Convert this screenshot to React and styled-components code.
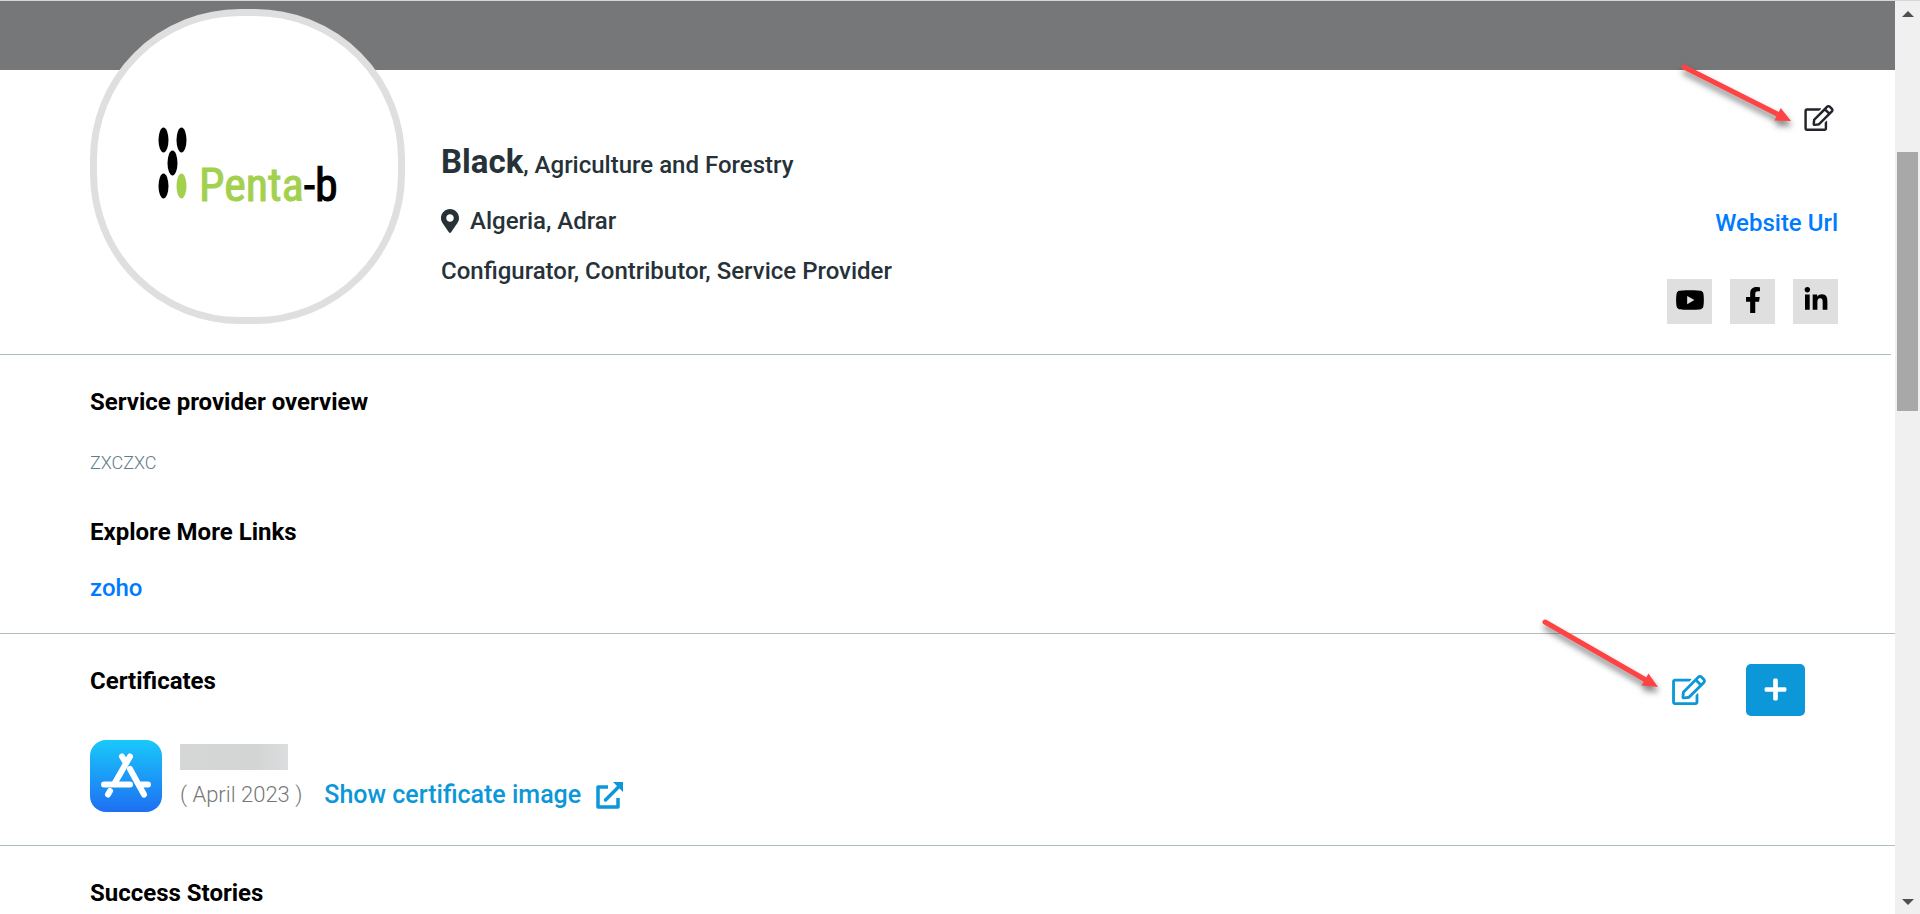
import React from 'react'
import styled, { createGlobalStyle } from 'styled-components'
import { FaMapMarkerAlt, FaRegEdit, FaYoutube, FaFacebookF, FaLinkedinIn, FaPlus } from 'react-icons/fa'

const GlobalStyle = createGlobalStyle`
  * {
    box-sizing: border-box;
  }

  body {
    margin: 0;
    background: #ffffff;
    font-family: Roboto, sans-serif;
    font-size: 24px;
    line-height: 28px;
    color: #263238;
  }

  h1, h2, p {
    margin: 0;
  }
`

const Page = styled.div`
  display: grid;
  grid-template-columns: 1fr 25px;
  min-height: 100vh;
  border-top: 1px solid #d5d6d6;
`

const Main = styled.main`
  min-width: 0;
`

const Cover = styled.div`
  height: 69px;
  background: #767779;
`

const Profile = styled.header`
  display: flex;
  gap: 36px;
  height: 285px;
  margin-right: 4px;
  padding: 0 53px 0 90px;
  border-bottom: 1px solid #b0bec5;
`

const Avatar = styled.div`
  display: flex;
  align-items: center;
  justify-content: center;
  flex: none;
  width: 315px;
  height: 315px;
  margin-top: -61px;
  border: 7px solid #dfdfdf;
  border-radius: 150px;
  background: #ffffff;
`

const Details = styled.div`
  display: flex;
  flex: 1;
  flex-direction: column;
  gap: 22px;
  padding-top: 72px;
  font-weight: 500;
`

const Name = styled.h1`
  font-size: 24px;
  font-weight: 500;
  line-height: 40px;

  strong {
    font-size: 33px;
    font-weight: 700;
  }
`

const Location = styled.p`
  display: flex;
  align-items: center;
  gap: 11px;

  svg {
    width: 18px;
  }
`

const Contact = styled.div`
  display: flex;
  flex-direction: column;
  align-items: flex-end;
  padding-top: 35px;
`

const IconButton = styled.button`
  display: flex;
  padding: 0;
  border: 0;
  background: none;
  color: ${({ $color }) => $color};
  cursor: pointer;

  svg {
    width: ${({ $width }) => $width}px;
    height: ${({ $height }) => $height}px;
  }
`

const Link = styled.a`
  display: inline-flex;
  align-items: center;
  gap: 15px;
  color: ${({ $accent }) => ($accent ? '#0b97d8' : '#007bff')};
  font-size: ${({ $accent }) => ($accent ? 25 : 24)}px;
  font-weight: 500;
  text-decoration: none;
`

const EditProfile = styled(IconButton)`
  margin: 0 4px 78px 0;
`

const Socials = styled.nav`
  display: flex;
  gap: 18px;
  margin-top: 42px;
`

const Social = styled.a`
  display: flex;
  justify-content: center;
  width: 45px;
  height: 45px;
  padding-top: 8px;
  background: #dfdfdf;
  color: #000000;
  font-size: 26px;

  svg {
    width: 30px;
  }
`

const Section = styled.section`
  padding: 33px 90px 31px;
  border-bottom: 1px solid #b0bec5;

  &:last-child {
    padding-bottom: 0;
    border-bottom: 0;
  }
`

const Heading = styled.h2`
  color: #000000;
  font-size: 24px;
  font-weight: 700;
  line-height: 28px;
`

const Overview = styled.p`
  margin: 33px 0 41px;
  color: #607d8b;
  font-size: 18px;
  font-weight: 300;
`

const LinkRow = styled.div`
  display: flex;
  margin-top: 28px;
`

const SectionHead = styled.div`
  display: flex;
  justify-content: space-between;
  height: 49px;
`

const Actions = styled.div`
  display: flex;
  align-items: center;
  gap: 40px;
  height: 52px;
  margin-top: -3px;
`

const AddButton = styled.button`
  display: flex;
  align-items: center;
  justify-content: center;
  width: 59px;
  height: 52px;
  padding: 0 0 2px;
  border: 0;
  border-radius: 5px;
  background: #0b97d8;
  color: #ffffff;
  font-size: 25px;
  cursor: pointer;
`

const Certificate = styled.article`
  display: flex;
  gap: 18px;
  margin-top: 24px;
  padding-bottom: 2px;
`

const CertificateText = styled.div`
  padding-top: 4px;
`

const HiddenName = styled.div`
  width: 108px;
  height: 26px;
  background: linear-gradient(90deg, #d5d6d6, #d3d4d4 70%, #dcddde);
`

const Issued = styled.div`
  display: flex;
  align-items: center;
  gap: 22px;
  margin-top: 11px;
  color: #777777;
  font-size: 22px;
  font-weight: 300;
`

const Scrollbar = styled.div`
  display: flex;
  flex-direction: column;
  align-items: center;
  padding: 10px 0 9px;
  background: #f0f0f0;
`

const Thumb = styled.div`
  width: 21px;
  height: 259px;
  margin: 135px 0 auto;
  background: #a8a8a8;
`

const Caret = styled.div`
  border: 6px solid transparent;
  border-width: ${({ $down }) => ($down ? '6px 6px 0' : '0 6px 6px')};
  border-top-color: ${({ $down }) => ($down ? '#505050' : 'transparent')};
  border-bottom-color: ${({ $down }) => ($down ? 'transparent' : '#505050')};
`

const Pointer = styled.svg`
  position: absolute;
  top: ${({ $top }) => $top}px;
  right: ${({ $right }) => $right}px;
  filter: drop-shadow(1px 5px 3px rgba(0, 0, 0, 0.5));
  pointer-events: none;
`

const LogoText = styled.text`
  font-family: 'Liberation Sans Narrow', 'Roboto Condensed', 'Liberation Sans', sans-serif;
  font-size: 46px;
`

const Logo = () => (
  <svg width="180" height="90" viewBox="0 0 180 90" role="img" aria-label="Penta-b">
    <ellipse cx="5.500" cy="18" rx="5" ry="12.500" />
    <ellipse cx="23.500" cy="18" rx="5" ry="12.500" />
    <ellipse cx="14.500" cy="41" rx="5" ry="12.500" />
    <ellipse cx="5.500" cy="64" rx="5" ry="12.500" />
    <ellipse cx="23.500" cy="64" rx="5" ry="12.500" fill="#a4d04f" />
    <LogoText x="41" y="79" fill="#a4d04f" stroke="#a4d04f">
      Penta<tspan fill="#000000" stroke="#000000">-b</tspan>
    </LogoText>
  </svg>
)

const AppStoreIcon = () => (
  <svg width="72" height="72" viewBox="0 0 72 72" aria-hidden="true">
    <defs>
      <linearGradient id="store" x1="0" y1="0" x2="0" y2="1">
        <stop offset="0" stopColor="#19c8fb" />
        <stop offset="1" stopColor="#1e6ff2" />
      </linearGradient>
    </defs>
    <rect width="72" height="72" rx="16" fill="url(#store)" />
    <g fill="none" stroke="#ffffff" strokeWidth="6" strokeLinecap="round">
      <path d="M40 16.500L24.500 43.500" />
      <path d="M32 16.500L36 23" />
      <path d="M40 29L54 54.500" />
      <path d="M14 44.500H40M51 44.500H58" />
      <path d="M20 51L18 54.500" />
    </g>
  </svg>
)

const OpenIcon = () => (
  <svg width="27" height="27" viewBox="0 0 27 27" fill="none" stroke="currentColor" strokeWidth="3.500" strokeLinejoin="round" aria-hidden="true">
    <path d="M12 5H2V25H22V16" />
    <path d="M9.500 18L22 5.500" strokeLinecap="round" />
    <path d="M17 0H27V10Z" fill="currentColor" stroke="none" />
  </svg>
)

const Arrow = ({ top, right, dx, dy }) => {
  const length = Math.hypot(dx, dy)
  const angle = (Math.atan2(dy, dx) * 180) / Math.PI
  return (
    <Pointer $top={top} $right={right} width={dx + 6} height={dy + 12} viewBox={`-4 -4 ${dx + 6} ${dy + 12}`} overflow="visible" aria-hidden="true">
      <g transform={`rotate(${angle})`} fill="#ff4343">
        <path d={`M0 0H${length - 12}`} stroke="#ff4343" strokeWidth="5" strokeLinecap="round" />
        <path d={`M${length - 15} -7L${length} 0L${length - 15} 7Z`} />
      </g>
    </Pointer>
  )
}

const App = () => (
  <>
    <GlobalStyle />
    <Page>
      <Main>
        <Cover />
        <Profile>
          <Avatar>
            <Logo />
          </Avatar>
          <Details>
            <Name><strong>Black</strong>, Agriculture and Forestry</Name>
            <Location><FaMapMarkerAlt />Algeria, Adrar</Location>
            <p>Configurator, Contributor, Service Provider</p>
          </Details>
          <Contact>
            <EditProfile $color="#212529" $width={30} $height={26} aria-label="Edit profile"><FaRegEdit /></EditProfile>
            <Link href="#website">Website Url</Link>
            <Socials>
              <Social href="#youtube" aria-label="YouTube"><FaYoutube /></Social>
              <Social href="#facebook" aria-label="Facebook"><FaFacebookF /></Social>
              <Social href="#linkedin" aria-label="LinkedIn"><FaLinkedinIn /></Social>
            </Socials>
          </Contact>
        </Profile>

        <Section>
          <Heading>Service provider overview</Heading>
          <Overview>ZXCZXC</Overview>
          <Heading>Explore More Links</Heading>
          <LinkRow>
            <Link href="#zoho">zoho</Link>
          </LinkRow>
        </Section>

        <Section>
          <SectionHead>
            <Heading>Certificates</Heading>
            <Actions>
              <IconButton $color="#0b97d8" $width={34} $height={30} aria-label="Edit certificates"><FaRegEdit /></IconButton>
              <AddButton aria-label="Add certificate"><FaPlus /></AddButton>
            </Actions>
          </SectionHead>
          <Certificate>
            <AppStoreIcon />
            <CertificateText>
              <HiddenName />
              <Issued>
                <span>( April 2023 )</span>
                <Link $accent href="#certificate">Show certificate image<OpenIcon /></Link>
              </Issued>
            </CertificateText>
          </Certificate>
        </Section>

        <Section>
          <Heading>Success Stories</Heading>
        </Section>
      </Main>
      <Scrollbar>
        <Caret />
        <Thumb />
        <Caret $down />
      </Scrollbar>
    </Page>
    <Arrow top={63} right={127} dx={107} dy={54} />
    <Arrow top={618} right={260} dx={113} dy={65} />
  </>
)

export default App
